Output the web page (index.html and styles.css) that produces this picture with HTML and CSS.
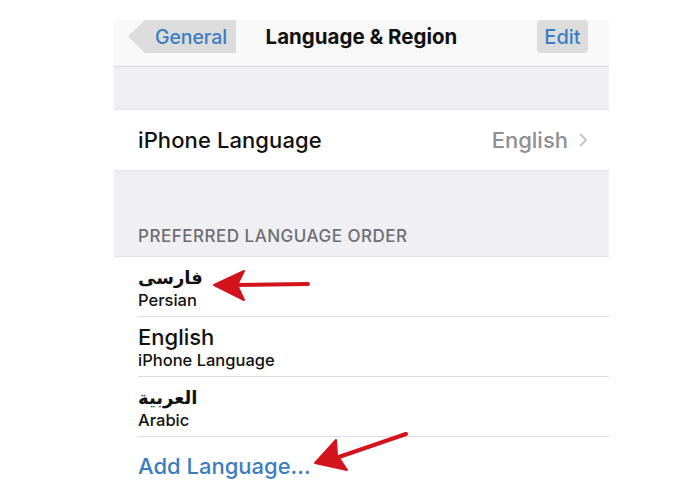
FILE: index.html
```html
<!DOCTYPE html>
<html>
<head>
<meta charset="utf-8">
<link rel="stylesheet" href="styles.css">
</head>
<body>
<div class="screen">
  <header class="nav">
    <div class="nav-left"><span class="back"><span class="back-label">General</span></span></div>
    <div class="nav-title">Language &amp; Region</div>
    <div class="nav-right"><span class="edit">Edit</span></div>
  </header>
  <div class="gap-top"></div>
  <div class="row single">
    <span class="row-title">iPhone Language</span>
    <span class="row-value">English <svg class="chev" width="9" height="14" viewBox="0 0 9 14"><path d="M1.5 1.5 L7 7 L1.5 12.5" fill="none" stroke="#c7c7cc" stroke-width="2" stroke-linecap="round" stroke-linejoin="round"/></svg></span>
  </div>
  <div class="section-head">PREFERRED LANGUAGE ORDER</div>
  <ul class="list">
    <li class="lang">
      <span class="lang-name arabic" dir="rtl">فارسی</span>
      <span class="lang-sub">Persian</span>
    </li>
    <li class="lang">
      <span class="lang-name">English</span>
      <span class="lang-sub">iPhone Language</span>
    </li>
    <li class="lang">
      <span class="lang-name arabic" dir="rtl">العربية</span>
      <span class="lang-sub">Arabic</span>
    </li>
    <li class="add">Add Language...</li>
  </ul>
  <svg class="arrows" width="495" height="480" viewBox="0 0 495 480">
    <g fill="#d3141c" stroke="#d3141c" stroke-linejoin="round">
      <line x1="194" y1="264" x2="120" y2="265" stroke-width="4" stroke-linecap="round"/>
      <path d="M100 265 L130 251 L123 265 L130 280 Z" stroke-width="2"/>
      <line x1="292" y1="414" x2="222" y2="438" stroke-width="4" stroke-linecap="round"/>
      <path d="M201 443 L222 420 L223 435 L233 450 Z" stroke-width="2"/>
    </g>
  </svg>
</div>
</body>
</html>
```
FILE: styles.css
```css
* { box-sizing: border-box; }
html, body { margin: 0; padding: 0; background: #ffffff; }
body {
  font-family: "Inter", "Liberation Sans", "DejaVu Sans", sans-serif;
  color: #111111;
}
.screen {
  position: relative;
  width: 495px;
  margin: 20px 0 0 114px;
  background: #ffffff;
}
.nav {
  height: 47px;
  background: #f8f8f8;
  border-bottom: 1px solid #d9d9dc;
  display: grid;
  grid-template-columns: 1fr auto 1fr;
  align-items: start;
}
.nav-left { display: flex; padding-left: 14px; }
.back {
  display: flex;
  align-items: center;
  height: 33px;
  width: 108px;
  padding-left: 27px;
  background: #dcdcdc;
  clip-path: polygon(0 50%, 17px 0, 100% 0, 100% 100%, 17px 100%);
}
.back-label {
  color: #3b7dc0;
  font-size: 19.5px;
  font-weight: 500;
  letter-spacing: -0.1px;
}
.nav-title {
  font-weight: 700;
  font-size: 20.5px;
  line-height: 33px;
  letter-spacing: 0;
}
.nav-right { display: flex; justify-content: flex-end; padding-right: 21px; }
.edit {
  display: flex;
  align-items: center;
  justify-content: center;
  width: 51px;
  height: 33px;
  background: #dcdcdc;
  border-radius: 4px;
  color: #3b7dc0;
  font-size: 20px;
  font-weight: 500;
}
.gap-top {
  height: 43px;
  background: #efeff4;
  border-bottom: 1px solid #e4e4e8;
}
.row {
  height: 60px;
  display: flex;
  align-items: center;
  justify-content: space-between;
  padding: 0 21px 0 24px;
  background: #ffffff;
}
.row-title { font-size: 22px; font-weight: 500; letter-spacing: 0.1px; }
.row-value {
  font-size: 22px;
  font-weight: 500;
  color: #8e8e93;
  display: flex;
  align-items: center;
  gap: 11px;
}
.section-head {
  height: 87px;
  background: #efeff4;
  border-top: 1px solid #e4e4e8;
  border-bottom: 1px solid #e4e4e8;
  display: flex;
  align-items: flex-end;
  padding: 0 0 10px 24px;
  font-size: 17px;
  font-weight: 500;
  color: #6d6d72;
  letter-spacing: 0.5px;
}
.list {
  list-style: none;
  margin: 0;
  padding: 0 0 0 24px;
}
.lang {
  height: 60px;
  border-bottom: 1px solid #dcdce0;
  display: flex;
  flex-direction: column;
  justify-content: center;
}
.lang-name {
  font-size: 22px;
  font-weight: 500;
  line-height: 27px;
}
.lang-name.arabic {
  font-family: "DejaVu Sans", sans-serif;
  font-weight: 700;
  font-size: 18px;
  align-self: flex-start;
}
.lang-sub {
  font-size: 16.5px;
  line-height: 19px;
  font-weight: 500;
}
.add {
  height: 54px;
  display: flex;
  align-items: center;
  color: #3b7dc0;
  font-size: 22px;
  font-weight: 500;
  padding-top: 4px;
}
.arrows {
  position: absolute;
  left: 0;
  top: 0;
  pointer-events: none;
}
```
